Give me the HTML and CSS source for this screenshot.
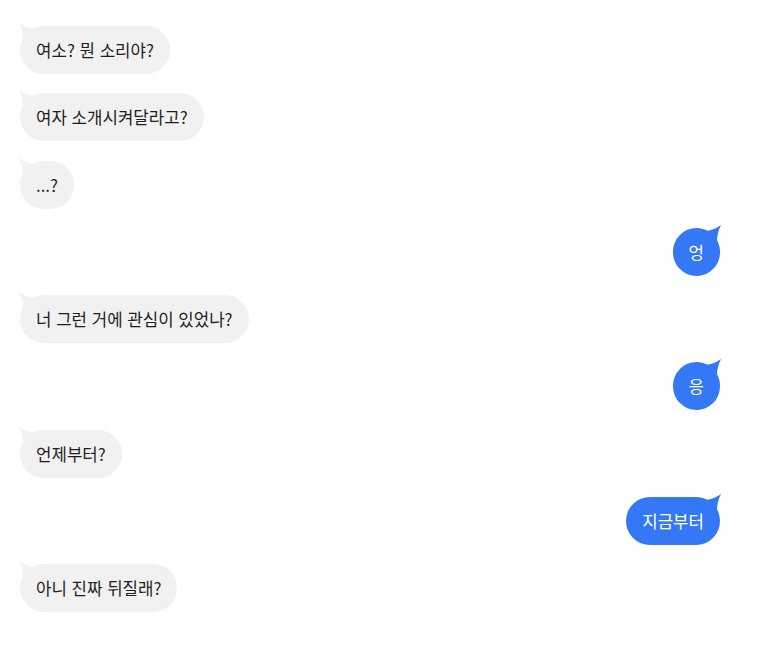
FILE: index.html
```html
<!DOCTYPE html>
<html lang="ko">
<head>
    <meta charset="UTF-8">
    <meta name="viewport" content="width=device-width, initial-scale=1.0">
    <title>Chat</title>
    <link rel="stylesheet" href="styles.css">
</head>
<body>
    <div class="chat">
        <div class="msg left"><div class="bubble">여소? 뭔 소리야?<svg class="tail" viewBox="0 0 18 16"><path d="M18 6 Q8 6 0 0 Q4 8 4 16 L18 16 Z"/></svg></div></div>
        <div class="msg left"><div class="bubble">여자 소개시켜달라고?<svg class="tail" viewBox="0 0 18 16"><path d="M18 6 Q8 6 0 0 Q4 8 4 16 L18 16 Z"/></svg></div></div>
        <div class="msg left"><div class="bubble">...?<svg class="tail" viewBox="0 0 18 16"><path d="M18 6 Q8 6 0 0 Q4 8 4 16 L18 16 Z"/></svg></div></div>
        <div class="msg right"><div class="bubble">엉<svg class="tail" viewBox="0 0 18 16"><path d="M0 6 Q10 6 18 0 Q14 8 14 16 L0 16 Z"/></svg></div></div>
        <div class="msg left"><div class="bubble">너 그런 거에 관심이 있었나?<svg class="tail" viewBox="0 0 18 16"><path d="M18 6 Q8 6 0 0 Q4 8 4 16 L18 16 Z"/></svg></div></div>
        <div class="msg right"><div class="bubble">응<svg class="tail" viewBox="0 0 18 16"><path d="M0 6 Q10 6 18 0 Q14 8 14 16 L0 16 Z"/></svg></div></div>
        <div class="msg left"><div class="bubble">언제부터?<svg class="tail" viewBox="0 0 18 16"><path d="M18 6 Q8 6 0 0 Q4 8 4 16 L18 16 Z"/></svg></div></div>
        <div class="msg right"><div class="bubble">지금부터<svg class="tail" viewBox="0 0 18 16"><path d="M0 6 Q10 6 18 0 Q14 8 14 16 L0 16 Z"/></svg></div></div>
        <div class="msg left"><div class="bubble">아니 진짜 뒤질래?<svg class="tail" viewBox="0 0 18 16"><path d="M18 6 Q8 6 0 0 Q4 8 4 16 L18 16 Z"/></svg></div></div>
    </div>
</body>
</html>
```

FILE: styles.css
```css
body {
    margin: 0;
    background: #fff;
    font-family: "Noto Sans CJK KR", "Noto Sans", sans-serif;
}
.chat {
    width: 700px;
    margin-left: 20px;
    padding-top: 26px;
    display: flex;
    flex-direction: column;
    gap: 19.25px;
}
.msg {
    display: flex;
}
.msg.right {
    justify-content: flex-end;
}
.bubble {
    position: relative;
    height: 48px;
    min-width: 16px;
    box-sizing: border-box;
    padding: 0 16px;
    border-radius: 24px;
    font-size: 16.8px;
    line-height: 48px;
    white-space: nowrap;
}
.left .bubble {
    background: #f1f1f1;
    color: #1e1e1e;
}
.right .bubble {
    background: #3478f6;
    color: #fff;
}
.tail {
    position: absolute;
    top: -3px;
    width: 18px;
    height: 16px;
}
.left .tail {
    left: -1px;
    fill: #f1f1f1;
}
.right .tail {
    right: -1px;
    fill: #3478f6;
}
```
